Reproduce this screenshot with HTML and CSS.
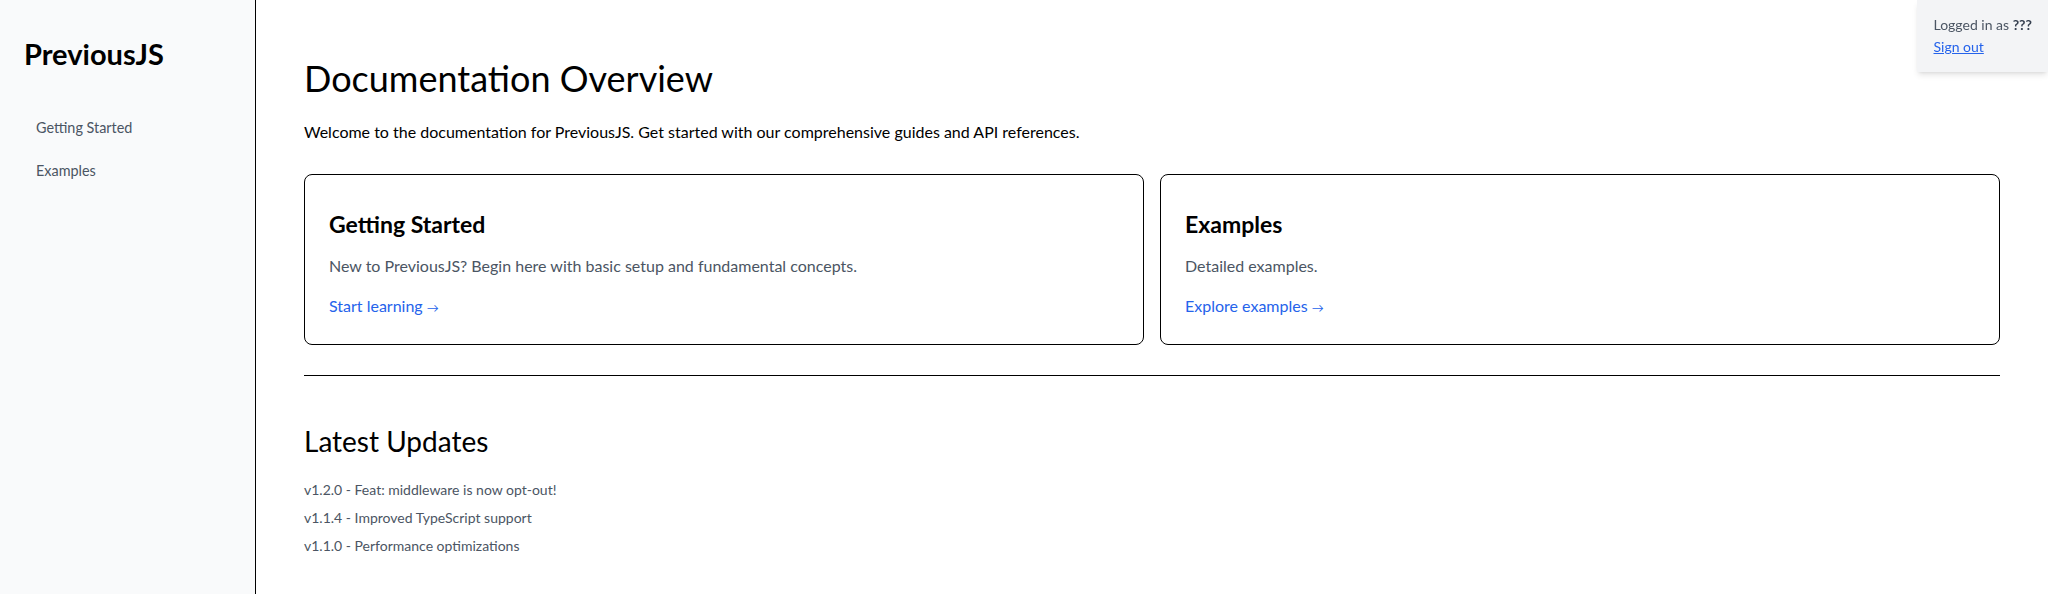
FILE: index.html
```html
<!DOCTYPE html>
<html lang="en">
<head>
<meta charset="utf-8">
<title>PreviousJS Docs</title>
<link rel="stylesheet" href="styles.css">
</head>
<body>
<div class="layout">
  <aside class="sidebar">
    <div class="brand">PreviousJS</div>
    <nav class="nav">
      <a class="nav-link" href="#">Getting Started</a>
      <a class="nav-link" href="#">Examples</a>
    </nav>
  </aside>
  <main class="main">
    <h1 class="title">Documentation Overview</h1>
    <p class="intro">Welcome to the documentation for PreviousJS. Get started with our comprehensive guides and API references.</p>
    <div class="cards">
      <div class="card">
        <h2 class="card-title">Getting Started</h2>
        <p class="card-text">New to PreviousJS? Begin here with basic setup and fundamental concepts.</p>
        <a class="card-link" href="#">Start learning <span class="arrow">→</span></a>
      </div>
      <div class="card">
        <h2 class="card-title">Examples</h2>
        <p class="card-text">Detailed examples.</p>
        <a class="card-link" href="#">Explore examples <span class="arrow">→</span></a>
      </div>
    </div>
    <hr class="divider">
    <h2 class="section-title">Latest Updates</h2>
    <ul class="updates">
      <li>v1.2.0 - Feat: middleware is now opt-out!</li>
      <li>v1.1.4 - Improved TypeScript support</li>
      <li>v1.1.0 - Performance optimizations</li>
    </ul>
  </main>
</div>
<div class="session">
  <div class="session-line">Logged in as <strong>???</strong></div>
  <a class="session-link" href="#">Sign out</a>
</div>
</body>
</html>
```

FILE: styles.css
```css
* { box-sizing: border-box; }
html, body { margin: 0; padding: 0; }
body {
  font-family: Lato, "Noto Sans", sans-serif;
  color: #000;
  background: #fff;
}
.layout {
  display: flex;
  min-height: 100vh;
}
.sidebar {
  width: 256px;
  flex-shrink: 0;
  background: #f9fafb;
  border-right: 1px solid #000;
  padding: 36px 24px;
}
.brand {
  font-size: 29px;
  line-height: 36px;
  font-weight: 700;
  margin-bottom: 46px;
}
.nav {
  display: flex;
  flex-direction: column;
  gap: 23px;
}
.nav-link {
  color: #4b5563;
  text-decoration: none;
  font-size: 14.4px;
  line-height: 20px;
  padding-left: 12px;
}
.main {
  flex: 1;
  padding: 56px 48px 48px;
}
.title {
  font-size: 36px;
  line-height: 44px;
  font-weight: 400;
  margin: 0 0 20px;
}
.intro {
  font-size: 16px;
  line-height: 24px;
  margin: 0 0 30px;
}
.cards {
  display: grid;
  grid-template-columns: 1fr 1fr;
  gap: 16px;
}
.card {
  border: 1px solid #000;
  border-radius: 8px;
  padding: 35px 24px 24px;
}
.card-title {
  font-size: 23px;
  line-height: 28px;
  font-weight: 700;
  margin: 0 0 16px;
}
.card-text {
  font-size: 16px;
  line-height: 24px;
  color: #4b5563;
  margin: 0 0 16px;
}
.card-link {
  font-size: 16px;
  line-height: 24px;
  color: #2563eb;
  text-decoration: none;
}
.arrow { font-size: 12px; }
.divider {
  border: 0;
  border-top: 1px solid #000;
  margin: 30px 0 47px;
}
.section-title {
  font-size: 28px;
  line-height: 36px;
  font-weight: 400;
  margin: 0 0 21px;
}
.updates {
  list-style: none;
  margin: 0;
  padding: 0;
  display: flex;
  flex-direction: column;
  gap: 8px;
}
.updates li {
  font-size: 14px;
  line-height: 20px;
  color: #4b5563;
}
.session {
  position: fixed;
  top: 0;
  right: 0;
  background: #f3f4f6;
  padding: 14px 16px;
  box-shadow: 0 4px 6px -1px rgba(0,0,0,0.1), 0 2px 4px -2px rgba(0,0,0,0.1);
  font-size: 14px;
  line-height: 22px;
  color: #4b5563;
}
.session strong { font-weight: 700; color: #374151; }
.session-link {
  color: #2563eb;
  text-decoration: underline;
}
```
